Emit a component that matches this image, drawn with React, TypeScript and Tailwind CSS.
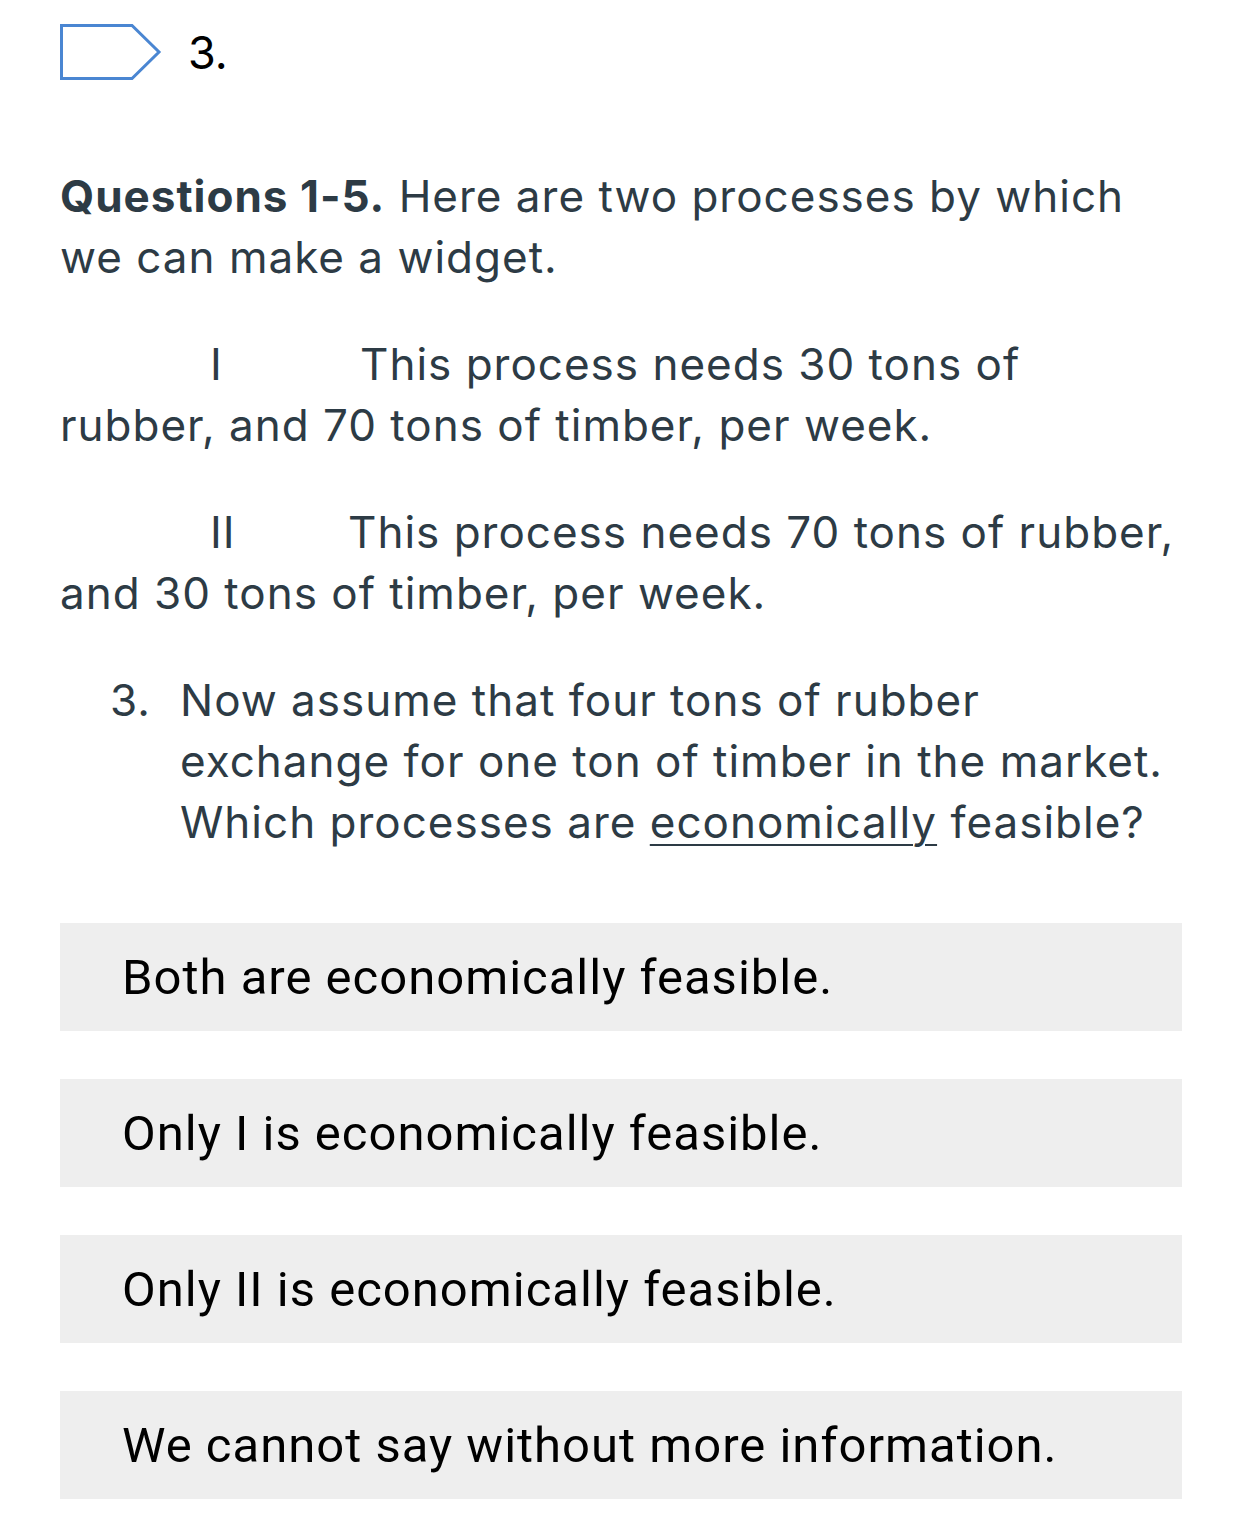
export default function App() {
  const options = [
    "Both are economically feasible.",
    "Only I is economically feasible.",
    "Only II is economically feasible.",
    "We cannot say without more information.",
  ];

  return (
    <div className="min-h-[1523px] w-[1238px] bg-white font-['Inter',sans-serif] text-[#2d3b45]">
      <div className="pl-[60px] pr-[56px]">
        {/* question header */}
        <div className="flex items-center gap-[26px] pt-[24px] h-[80px]">
          <svg width="102" height="56" viewBox="0 0 102 56" fill="none">
            <path d="M1.5 1.5 H72 L99 28 L72 54.5 H1.5 Z" stroke="#4a86d2" strokeWidth="3" />
          </svg>
          <span className="text-[45px] leading-none text-black">3.</span>
        </div>

        <div className="mt-[86px] text-[44px] leading-[61px] tracking-[1px]">
          <p>
            <strong className="font-bold">Questions 1-5.</strong> Here are two processes by which
            <br />
            we can make a widget.
          </p>

          <p className="mt-[46px]">
            <span className="inline-block w-[150px]" />
            <span className="inline-block w-[150px]">I</span>
            This process needs 30 tons of
            <br />
            rubber, and 70 tons of timber, per week.
          </p>

          <p className="mt-[46px]">
            <span className="inline-block w-[150px]" />
            <span className="inline-block w-[138px]">II</span>
            This process needs 70 tons of rubber,
            <br />
            and 30 tons of timber, per week.
          </p>

          <ol className="mt-[46px] pl-[50px]">
            <li className="flex">
              <span className="w-[70px] shrink-0">3.</span>
              <span>
                Now assume that four tons of rubber
                <br />
                exchange for one ton of timber in the market.
                <br />
                Which processes are <u className="underline-offset-[6px] decoration-[2px]">economically</u> feasible?
              </span>
            </li>
          </ol>
        </div>

        <div className="mt-[70px] flex flex-col gap-[48px]">
          {options.map((o) => (
            <div key={o} className="h-[108px] bg-[#eeeeee] flex items-center px-[62px]">
              <span className="font-['Roboto',sans-serif] text-[49px] tracking-[1px] text-black leading-none">{o}</span>
            </div>
          ))}
        </div>
      </div>
    </div>
  );
}
